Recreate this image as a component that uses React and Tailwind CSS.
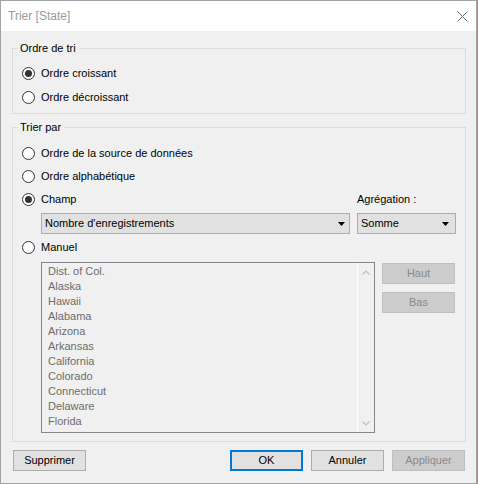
import React from "react";

function Radio({ checked, label }) {
  return (
    <div className="flex items-center gap-[6px] h-[16px] leading-[16px]">
      <span className="w-[13px] h-[13px] rounded-full border border-[#333333] bg-white flex items-center justify-center shrink-0">
        {checked && <span className="w-[7px] h-[7px] rounded-full bg-[#333333]" />}
      </span>
      <span className="text-black">{label}</span>
    </div>
  );
}

function Caret() {
  return (
    <svg width="7" height="4" viewBox="0 0 7 4" className="shrink-0">
      <polygon points="0,0 7,0 3.5,4" fill="#000" />
    </svg>
  );
}

function Chevron({ down }) {
  return (
    <svg width="8" height="5" viewBox="0 0 8 5">
      <polyline
        points={down ? "0.5,0.5 4,4 7.5,0.5" : "0.5,4.5 4,1 7.5,4.5"}
        fill="none"
        stroke="#c4c4c4"
        strokeWidth="1.4"
      />
    </svg>
  );
}

function Button({ children, primary, disabled, className = "" }) {
  const base = "w-[73px] h-[21px] flex items-center justify-center leading-none";
  if (disabled)
    return <div className={`${base} bg-[#cccccc] border border-[#bfbfbf] text-[#8a8a8a] ${className}`}>{children}</div>;
  if (primary)
    return <div className={`${base} bg-[#e1e1e1] border-2 border-[#0078d7] text-black ${className}`}>{children}</div>;
  return <div className={`${base} bg-[#e1e1e1] border border-[#adadad] text-black ${className}`}>{children}</div>;
}

const states = [
  "Dist. of Col.",
  "Alaska",
  "Hawaii",
  "Alabama",
  "Arizona",
  "Arkansas",
  "California",
  "Colorado",
  "Connecticut",
  "Delaware",
  "Florida",
];

export default function App() {
  return (
    <div className="w-[478px] h-[484px] flex bg-[#f0f0f0] font-['Liberation_Sans',Arial,sans-serif] text-[11px] text-black">
      <div className="w-[477px] h-[484px] flex flex-col border border-[#a3a3a3] bg-[#f0f0f0]">
        {/* Title bar */}
        <div className="h-[30px] bg-white flex items-center justify-between pl-[7px] pr-[8px] shrink-0">
          <span className="text-[12px] text-[#9a9a9a]">Trier [State]</span>
          <svg width="11" height="11" viewBox="0 0 11 11">
            <line x1="0.5" y1="0.5" x2="10.5" y2="10.5" stroke="#6b6b6b" strokeWidth="1" />
            <line x1="10.5" y1="0.5" x2="0.5" y2="10.5" stroke="#6b6b6b" strokeWidth="1" />
          </svg>
        </div>

        {/* Body */}
        <div className="flex flex-col pl-[11px] pr-[10px] pt-[9px]">
          <fieldset className="border border-[#dcdcdc]">
            <legend className="ml-[4px] px-[3px] leading-[16px]">Ordre de tri</legend>
            <div className="flex flex-col gap-[8px] pl-[9px] pt-[9px] pb-[8px]">
              <Radio checked label="Ordre croissant" />
              <Radio label="Ordre décroissant" />
            </div>
          </fieldset>

          <fieldset className="border border-[#dcdcdc] mt-[5px]">
            <legend className="ml-[4px] px-[3px] leading-[16px]">Trier par</legend>
            <div className="flex flex-col pl-[9px] pt-[10px] pb-[8px]">
              <Radio label="Ordre de la source de données" />
              <div className="mt-[7px]">
                <Radio label="Ordre alphabétique" />
              </div>
              <div className="mt-[7px] grid grid-cols-[335px_100px] gap-y-[6px]">
                <Radio checked label="Champ" />
                <div className="h-[16px] leading-[16px]">Agrégation :</div>
                <div className="ml-[19px] w-[309px] h-[21px] bg-[#e1e1e1] border border-[#adadad] flex items-center justify-between pl-[3px] pr-[4px]">
                  <span>Nombre d'enregistrements</span>
                  <Caret />
                </div>
                <div className="w-[99px] h-[21px] bg-[#e1e1e1] border border-[#adadad] flex items-center justify-between pl-[3px] pr-[6px]">
                  <span>Somme</span>
                  <Caret />
                </div>
              </div>
              <div className="mt-[5px]">
                <Radio label="Manuel" />
              </div>
              <div className="mt-[7px] flex">
                <div className="ml-[19px] w-[334px] h-[171px] border border-[#828790] bg-[#f0f0f0] flex">
                  <div className="flex-1 pl-[6px] pt-[1px] flex flex-col">
                    {states.map((s) => (
                      <div key={s} className="leading-[15px] text-[#6d6d6d]">
                        {s}
                      </div>
                    ))}
                  </div>
                  <div className="w-[17px] border-l border-white flex flex-col items-center justify-between pt-[7px] pb-[6px]">
                    <Chevron />
                    <Chevron down />
                  </div>
                </div>
                <div className="ml-[7px] mt-[1px] flex flex-col gap-[8px]">
                  <Button disabled>Haut</Button>
                  <Button disabled>Bas</Button>
                </div>
              </div>
            </div>
          </fieldset>

          <div className="mt-[8px] flex items-center justify-between">
            <Button className="ml-[1px]">Supprimer</Button>
            <div className="flex gap-[8px] mr-[1px]">
              <Button primary>OK</Button>
              <Button>Annuler</Button>
              <Button disabled>Appliquer</Button>
            </div>
          </div>
        </div>
      </div>
      <div className="w-px h-[484px] bg-[#b08a8a]" />
    </div>
  );
}
